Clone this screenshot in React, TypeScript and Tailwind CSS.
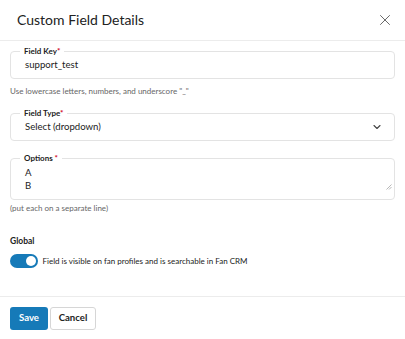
import { X, ChevronDown } from 'lucide-react'

function Field({ label, children, className = '' }: { label: string; children: React.ReactNode; className?: string }) {
  return (
    <fieldset className={`border border-[#e3e3e3] rounded-[4px] px-[14px] ${className}`}>
      <legend className="px-[4px] -ml-[5px] text-[8px] font-bold leading-[8px] text-[#222]">
        {label}
        <span className="text-[#d0021b]">*</span>
      </legend>
      {children}
    </fieldset>
  )
}

export default function App() {
  return (
    <div className="w-[405px] h-[339px] bg-white font-['Lato',sans-serif] text-[#222] flex flex-col">
      <div className="h-[41px] flex items-center justify-between pl-[17px] pr-[11px] border-b border-[#ececec]">
        <h1 className="text-[14px] leading-none">Custom Field Details</h1>
        <X size={18} strokeWidth={1.3} className="text-[#666]" />
      </div>

      <div className="px-[10px] pt-[6px] flex flex-col">
        <Field label="Field Key" className="h-[32px]">
          <div className="text-[9.6px] leading-[12px] pt-[4px]">support_test</div>
        </Field>
        <p className="text-[8px] leading-[12px] text-[#666] mt-[5.5px]">Use lowercase letters, numbers, and underscore "_"</p>

        <Field label="Field Type" className="h-[32px] mt-[12.5px]">
          <div className="flex items-center justify-between pt-[4px]">
            <span className="text-[9.6px] leading-[12px]">Select (dropdown)</span>
            <ChevronDown size={12} strokeWidth={2.2} className="text-[#444] mr-[-3px]" />
          </div>
        </Field>

        <Field label="Options " className="h-[46px] mt-[13px] relative">
          <div className="text-[9.6px] leading-[12.5px] pt-[5px]">
            <div>A</div>
            <div>B</div>
          </div>
          <svg className="absolute right-[2px] bottom-[2px]" width="6" height="6" viewBox="0 0 6 6">
            <path d="M5.5 0.5 L0.5 5.5 M5.5 3 L3 5.5" stroke="#999" strokeWidth="0.7" />
          </svg>
        </Field>
        <p className="text-[8px] leading-[12px] text-[#666] mt-[2px]">(put each on a separate line)</p>

        <div className="text-[8.5px] font-bold mt-[22px] leading-[10px]">Global</div>
        <div className="flex items-center gap-[4.5px] mt-[7.5px]">
          <div className="w-[28px] h-[14px] rounded-full bg-[#167ab8] flex items-center justify-end pr-[2px]">
            <div className="w-[10px] h-[10px] rounded-full bg-white" />
          </div>
          <span className="text-[8px] leading-[12px]">Field is visible on fan profiles and is searchable in Fan CRM</span>
        </div>
      </div>

      <div className="mt-auto border-t border-[#ececec] h-[43px] px-[10px] flex items-start pt-[10px] gap-[2px]">
        <button className="h-[23px] w-[38px] rounded-[3px] bg-[#167ab8] text-white text-[9.6px] font-bold">Save</button>
        <button className="h-[23px] w-[46px] rounded-[3px] border border-[#d6d6d6] bg-white text-[#222] text-[9.6px] font-bold">Cancel</button>
      </div>
    </div>
  )
}
